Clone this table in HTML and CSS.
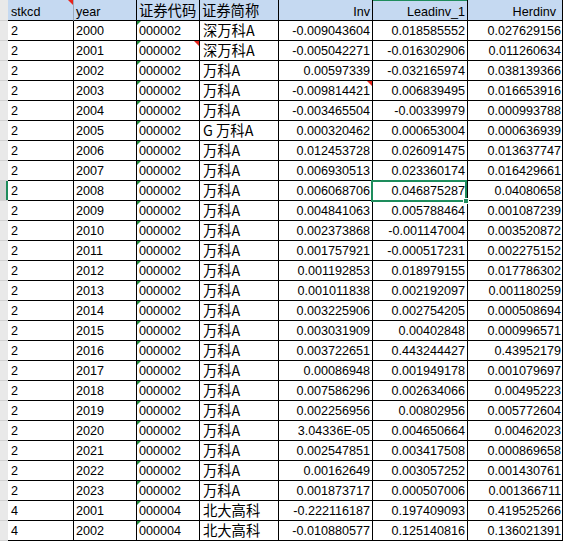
FILE: index.html
```html
<!DOCTYPE html>
<html lang="zh">
<head>
<meta charset="utf-8">
<title>Sheet</title>
<link rel="stylesheet" href="styles.css">
</head>
<body>
<div class="sheet">
  <div class="rh"></div>
  <div class="c hd a first">stkcd<i class="cm"></i></div>
  <div class="c hd">year</div>
  <div class="c hd cj">证券代码</div>
  <div class="c hd cj">证券简称</div>
  <div class="c hd num">Inv</div>
  <div class="c hd num colsel">Leadinv_1</div>
  <div class="c hd num g hg">Herdinv</div>

  <div class="rh"></div><div class="c a">2</div><div class="c">2000</div><div class="c code">000002<i class="tg"></i></div><div class="c cj">深万科A</div><div class="c num">-0.009043604</div><div class="c num">0.018585552</div><div class="c num g">0.027629156</div>
  <div class="rh"></div><div class="c a">2</div><div class="c">2001</div><div class="c code">000002<i class="tg"></i><i class="cm"></i></div><div class="c cj">深万科A</div><div class="c num">-0.005042271</div><div class="c num">-0.016302906</div><div class="c num g">0.011260634</div>
  <div class="rh"></div><div class="c a">2</div><div class="c">2002</div><div class="c code">000002<i class="tg"></i></div><div class="c cj">万科A</div><div class="c num">0.00597339</div><div class="c num">-0.032165974</div><div class="c num g">0.038139366</div>
  <div class="rh"></div><div class="c a">2</div><div class="c">2003</div><div class="c code">000002<i class="tg"></i></div><div class="c cj">万科A</div><div class="c num">-0.009814421<i class="cm"></i></div><div class="c num">0.006839495</div><div class="c num g">0.016653916</div>
  <div class="rh"></div><div class="c a">2</div><div class="c">2004</div><div class="c code">000002<i class="tg"></i></div><div class="c cj">万科A</div><div class="c num">-0.003465504</div><div class="c num">-0.00339979</div><div class="c num g">0.000993788</div>
  <div class="rh"></div><div class="c a">2</div><div class="c">2005</div><div class="c code">000002<i class="tg"></i></div><div class="c cj">G 万科A</div><div class="c num">0.000320462</div><div class="c num">0.000653004</div><div class="c num g">0.000636939</div>
  <div class="rh"></div><div class="c a">2</div><div class="c">2006</div><div class="c code">000002<i class="tg"></i></div><div class="c cj">万科A</div><div class="c num">0.012453728</div><div class="c num">0.026091475</div><div class="c num g">0.013637747</div>
  <div class="rh"></div><div class="c a">2</div><div class="c">2007</div><div class="c code">000002<i class="tg"></i></div><div class="c cj">万科A</div><div class="c num">0.006930513</div><div class="c num">0.023360174</div><div class="c num g">0.016429661</div>
  <div class="rh rowsel"></div><div class="c a">2</div><div class="c">2008</div><div class="c code">000002<i class="tg"></i></div><div class="c cj">万科A</div><div class="c num">0.006068706</div><div class="c num active">0.046875287<i class="box"></i><i class="handle"></i></div><div class="c num g">0.04080658</div>
  <div class="rh"></div><div class="c a">2</div><div class="c">2009</div><div class="c code">000002<i class="tg"></i></div><div class="c cj">万科A</div><div class="c num">0.004841063</div><div class="c num">0.005788464</div><div class="c num g">0.001087239</div>
  <div class="rh"></div><div class="c a">2</div><div class="c">2010</div><div class="c code">000002<i class="tg"></i></div><div class="c cj">万科A</div><div class="c num">0.002373868</div><div class="c num">-0.001147004</div><div class="c num g">0.003520872</div>
  <div class="rh"></div><div class="c a">2</div><div class="c">2011</div><div class="c code">000002<i class="tg"></i></div><div class="c cj">万科A</div><div class="c num">0.001757921</div><div class="c num">-0.000517231</div><div class="c num g">0.002275152</div>
  <div class="rh"></div><div class="c a">2</div><div class="c">2012</div><div class="c code">000002<i class="tg"></i></div><div class="c cj">万科A</div><div class="c num">0.001192853</div><div class="c num">0.018979155</div><div class="c num g">0.017786302</div>
  <div class="rh"></div><div class="c a">2</div><div class="c">2013</div><div class="c code">000002<i class="tg"></i></div><div class="c cj">万科A</div><div class="c num">0.001011838</div><div class="c num">0.002192097</div><div class="c num g">0.001180259</div>
  <div class="rh"></div><div class="c a">2</div><div class="c">2014</div><div class="c code">000002<i class="tg"></i></div><div class="c cj">万科A</div><div class="c num">0.003225906</div><div class="c num">0.002754205</div><div class="c num g">0.000508694</div>
  <div class="rh"></div><div class="c a">2</div><div class="c">2015</div><div class="c code">000002<i class="tg"></i></div><div class="c cj">万科A</div><div class="c num">0.003031909</div><div class="c num">0.00402848</div><div class="c num g">0.000996571</div>
  <div class="rh"></div><div class="c a">2</div><div class="c">2016</div><div class="c code">000002<i class="tg"></i></div><div class="c cj">万科A</div><div class="c num">0.003722651</div><div class="c num">0.443244427</div><div class="c num g">0.43952179</div>
  <div class="rh"></div><div class="c a">2</div><div class="c">2017</div><div class="c code">000002<i class="tg"></i></div><div class="c cj">万科A</div><div class="c num">0.00086948</div><div class="c num">0.001949178</div><div class="c num g">0.001079697</div>
  <div class="rh"></div><div class="c a">2</div><div class="c">2018</div><div class="c code">000002<i class="tg"></i></div><div class="c cj">万科A</div><div class="c num">0.007586296</div><div class="c num">0.002634066</div><div class="c num g">0.00495223</div>
  <div class="rh"></div><div class="c a">2</div><div class="c">2019</div><div class="c code">000002<i class="tg"></i></div><div class="c cj">万科A</div><div class="c num">0.002256956</div><div class="c num">0.00802956</div><div class="c num g">0.005772604</div>
  <div class="rh"></div><div class="c a">2</div><div class="c">2020</div><div class="c code">000002<i class="tg"></i></div><div class="c cj">万科A</div><div class="c num">3.04336E-05</div><div class="c num">0.004650664</div><div class="c num g">0.00462023</div>
  <div class="rh"></div><div class="c a">2</div><div class="c">2021</div><div class="c code">000002<i class="tg"></i></div><div class="c cj">万科A</div><div class="c num">0.002547851</div><div class="c num">0.003417508</div><div class="c num g">0.000869658</div>
  <div class="rh"></div><div class="c a">2</div><div class="c">2022</div><div class="c code">000002<i class="tg"></i></div><div class="c cj">万科A</div><div class="c num">0.00162649</div><div class="c num">0.003057252</div><div class="c num g">0.001430761</div>
  <div class="rh"></div><div class="c a">2</div><div class="c">2023</div><div class="c code">000002<i class="tg"></i></div><div class="c cj">万科A</div><div class="c num">0.001873717</div><div class="c num">0.000507006</div><div class="c num g">0.001366711</div>
  <div class="rh"></div><div class="c a">4</div><div class="c">2001</div><div class="c code">000004<i class="tg"></i></div><div class="c cj">北大高科</div><div class="c num">-0.222116187</div><div class="c num">0.197409093</div><div class="c num g">0.419525266</div>
  <div class="rh"></div><div class="c a">4</div><div class="c">2002</div><div class="c code">000004<i class="tg"></i></div><div class="c cj">北大高科</div><div class="c num">-0.010880577</div><div class="c num">0.125140816</div><div class="c num g">0.136021391</div>
</div>
</body>
</html>
```

FILE: styles.css
```css
* {
  box-sizing: border-box;
}

html, body {
  margin: 0;
  padding: 0;
  background: #ffffff;
}

body {
  font-family: "Liberation Sans", Arial, sans-serif;
  font-size: 12.6px;
  color: #000000;
}

.sheet {
  display: grid;
  grid-template-columns: 8px 66px 63px 63px 79px 94px 95px 95px;
  grid-template-rows: 21px;
  grid-auto-rows: 20px;
  width: 563px;
}

.rh {
  background: #e9e9e9;
  border-bottom: 1px solid #d2d2d2;
}

.rh.rowsel {
  background: #d3d3d3;
  box-shadow: inset -2px 0 0 #1e8c5c;
}

.c {
  position: relative;
  border-right: 1px solid #000000;
  border-bottom: 1px solid #000000;
  padding: 2px 2px 0 2px;
  line-height: 17px;
  white-space: nowrap;
}

.c.a {
  padding-left: 3px;
}

.hd {
  background: #c5d9f1;
  padding-top: 4px;
}

.hd.first {
  border-right-color: #9aa9bb;
}

.hd.colsel {
  box-shadow: inset 0 1px 0 #1e8c5c;
}

.num {
  text-align: right;
}

.num.g {
  padding-right: 1px;
}

.hd.hg {
  padding-right: 6px;
}

.cj {
  font-family: "Noto Sans CJK SC", "Noto Sans CJK JP", sans-serif;
  font-size: 14.3px;
  padding-top: 0;
  padding-left: 3px;
}

.hd.cj {
  padding-top: 2px;
  padding-left: 2px;
  line-height: 16px;
}

/* comment indicator (red triangle top-right) */
.cm {
  position: absolute;
  top: 0;
  right: 0;
  width: 0;
  height: 0;
  border-top: 5px solid #e8241c;
  border-left: 5px solid transparent;
}

/* number-stored-as-text indicator (green triangle top-left) */
.tg {
  position: absolute;
  top: 0;
  left: 0;
  width: 0;
  height: 0;
  border-top: 4px solid #1e8a3a;
  border-right: 4px solid transparent;
}

.active {
  z-index: 2;
}

.box {
  position: absolute;
  left: -2px;
  top: -1px;
  width: 96px;
  height: 22px;
  border: 2px solid #1e8c5c;
  z-index: 3;
}

.handle {
  position: absolute;
  right: -2px;
  bottom: -4px;
  width: 6px;
  height: 6px;
  background: #1e8c5c;
  border: 1px solid #ffffff;
  z-index: 4;
}
```
